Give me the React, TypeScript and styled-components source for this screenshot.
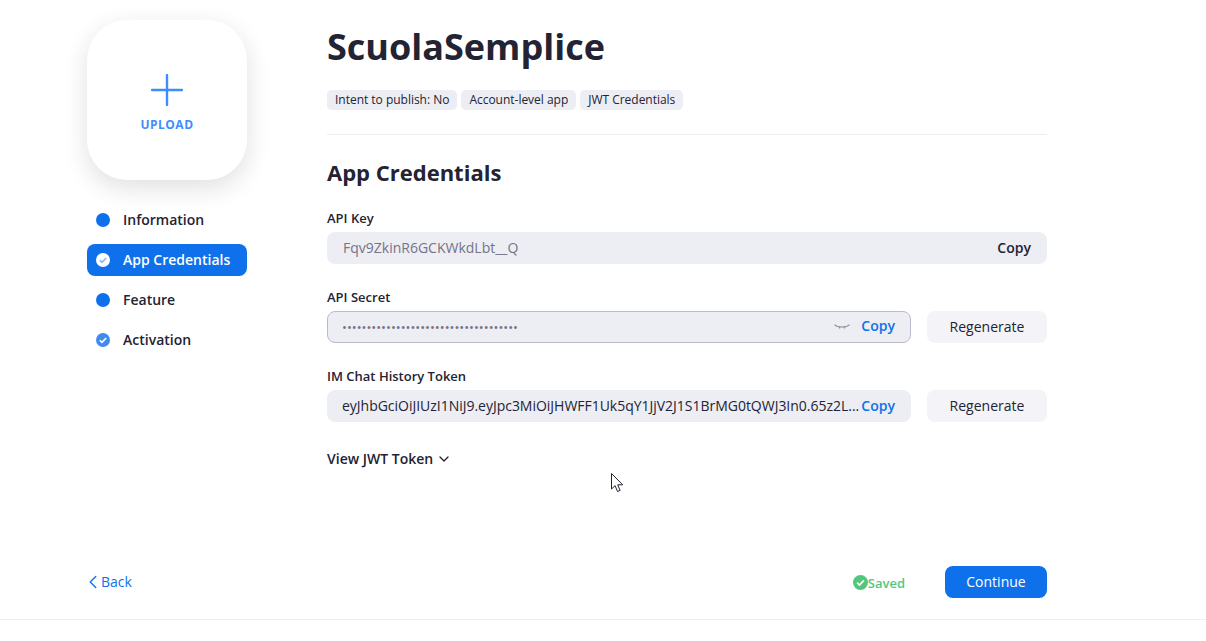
import type { ReactNode } from 'react';
import styled, { createGlobalStyle } from 'styled-components';
import { FiChevronDown, FiChevronLeft } from 'react-icons/fi';

const GlobalStyle = createGlobalStyle`
   html, body {
      margin: 0;
      padding: 0;
      background: #fff;
      font-family: 'Open Sans', sans-serif;
      color: #232333;
   }
   * { box-sizing: border-box; }
`;

const Page = styled.div`
   position: relative;
   width: 1206px;
   height: 641px;
   overflow: hidden;
   display: flex;
   flex-direction: column;
`;

const Content = styled.div`
   width: 960px;
   height: 619px;
   margin-left: 87px;
   display: grid;
   grid-template-columns: 160px 720px;
   column-gap: 80px;
   grid-template-rows: 1fr 32px;
   padding: 20px 0 21px;
`;

const FooterLine = styled.div`
   height: 1px;
   background: #ededf4;
`;

const Sidebar = styled.aside`
   display: flex;
   flex-direction: column;
`;

const UploadCard = styled.div`
   width: 160px;
   height: 160px;
   border-radius: 40px;
   background: #fff;
   box-shadow: 0 8px 24px rgba(35, 35, 51, 0.14);
   display: flex;
   flex-direction: column;
   align-items: center;
   padding-top: 54px;
   margin-bottom: 24px;
`;

const UploadLabel = styled.span`
   margin-top: 11px;
   font-size: 12px;
   line-height: 16px;
   font-weight: 700;
   letter-spacing: 0.5px;
   color: #3f8cff;
`;

const Steps = styled.nav`
   display: flex;
   flex-direction: column;
   gap: 8px;
`;

const Step = styled.div<{ $active?: boolean }>`
   height: 32px;
   display: flex;
   align-items: center;
   gap: 13px;
   padding-left: 9px;
   border-radius: 8px;
   font-size: 14px;
   font-weight: 600;
   background: ${(p) => (p.$active ? '#0e71eb' : 'transparent')};
   color: ${(p) => (p.$active ? '#fff' : '#232333')};
`;

const StepLabel = styled.span`
   margin-bottom: 2px;
`;

const Dot = styled.span`
   width: 14px;
   height: 14px;
   border-radius: 50%;
   background: #0e71eb;
`;

const Main = styled.main`
   display: flex;
   flex-direction: column;
`;

const Title = styled.h1`
   margin: 0;
   font-size: 36px;
   line-height: 54px;
   font-weight: 700;
   color: #232333;
`;

const Tags = styled.div`
   display: flex;
   gap: 4px;
   margin-top: 16px;
`;

const Tag = styled.span`
   height: 20px;
   padding: 0 8px;
   border-radius: 5px;
   background: #ededf4;
   font-size: 12px;
   line-height: 20px;
   letter-spacing: -0.02px;
   color: #232333;
`;

const Divider = styled.hr`
   width: 100%;
   height: 1px;
   margin: 24px 0 0;
   border: 0;
   background: #ededf4;
`;

const Heading = styled.h2`
   margin: 21px 0 0;
   font-size: 22px;
   line-height: 32px;
   font-weight: 700;
   color: #232333;
`;

const Field = styled.div<{ $first?: boolean }>`
   margin-top: ${(p) => (p.$first ? '20px' : '23px')};
`;

const Label = styled.div`
   font-size: 13px;
   line-height: 20px;
   font-weight: 600;
   margin-bottom: 4px;
   color: #232333;
`;

const FieldRow = styled.div`
   display: flex;
   gap: 16px;
`;

const InputBox = styled.div<{ $outlined?: boolean }>`
   flex: 1;
   min-width: 0;
   height: 32px;
   display: flex;
   align-items: center;
   padding: 0 15px 0 14px;
   border-radius: 8px;
   background: #ededf4;
   border: 1px solid ${(p) => (p.$outlined ? '#babacc' : '#ededf4')};
`;

const Value = styled.span<{ $muted?: boolean }>`
   flex: 1;
   min-width: 0;
   padding-left: ${(p) => (p.$muted ? '1px' : '0')};
   font-size: 14px;
   line-height: 20px;
   letter-spacing: ${(p) => (p.$muted ? '0' : '-0.02px')};
   white-space: nowrap;
   color: ${(p) => (p.$muted ? '#747487' : '#232333')};
`;

const Dots = styled.span`
   flex: 1;
   font-size: 13px;
   line-height: 20px;
   color: #747487;
`;

const CopyLink = styled.span<{ $blue?: boolean; $raised?: boolean }>`
   flex: none;
   font-size: 14px;
   font-weight: 600;
   line-height: 20px;
   margin-bottom: ${(p) => (p.$raised ? '2px' : '0')};
   color: ${(p) => (p.$blue ? '#0e71eb' : '#232333')};
`;

const EyeIcon = styled.svg`
   flex: none;
   margin-right: 11px;
`;

const RegenButton = styled.button`
   flex: none;
   width: 120px;
   height: 32px;
   padding: 0 0 2px;
   border: 0;
   border-radius: 8px;
   background: #f3f3f8;
   font-family: inherit;
   font-size: 14px;
   color: #232333;
`;

const Toggle = styled.div`
   display: flex;
   align-items: center;
   gap: 3px;
   margin-top: 27px;
   font-size: 14px;
   line-height: 20px;
   font-weight: 600;
   color: #232333;
`;

const BackLink = styled.div`
   display: flex;
   align-items: center;
   height: 32px;
   padding-bottom: 2px;
   font-size: 14px;
   color: #0e71eb;
`;

const BackChevron = styled(FiChevronLeft)`
   margin: 1px -3px 0 -5px;
   stroke-width: 1.5;
`;

const Actions = styled.div`
   display: flex;
   justify-content: flex-end;
   align-items: center;
   height: 32px;
`;

const Saved = styled.span`
   display: flex;
   align-items: center;
   margin-right: 40px;
   font-size: 13px;
   font-weight: 600;
   color: #52c77b;
`;

const SavedText = styled.span`
   margin-top: 2px;
`;

const ContinueButton = styled.button`
   width: 102px;
   height: 32px;
   padding: 0 0 2px;
   border: 0;
   border-radius: 8px;
   background: #0e71eb;
   color: #fff;
   font-family: inherit;
   font-size: 14px;
   font-weight: 500;
`;

const Cursor = styled.svg`
   position: absolute;
   left: 611px;
   top: 473px;
`;

function CheckDot({ fill, tick, size = 14 }: { fill: string; tick: string; size?: number }) {
   return (
      <svg width={size} height={size} viewBox="0 0 14 14">
         <circle cx="7" cy="7" r="7" fill={fill} />
         <path d="M3.8 7.2l2.2 2.2 4.2-4.4" fill="none" stroke={tick} strokeWidth="1.6" />
      </svg>
   );
}

function StepItem({ icon, active, children }: { icon: ReactNode; active?: boolean; children: ReactNode }) {
   return (
      <Step $active={active}>
         {icon}
         <StepLabel>{children}</StepLabel>
      </Step>
   );
}

export default function App() {
   return (
      <>
         <GlobalStyle />
         <Page>
            <Content>
               <Sidebar>
                  <UploadCard>
                     <svg width="32" height="32" viewBox="0 0 32 32">
                        <path d="M16 1v30M1 16h30" stroke="#3f8cff" strokeWidth="2.4" strokeLinecap="round" />
                     </svg>
                     <UploadLabel>UPLOAD</UploadLabel>
                  </UploadCard>
                  <Steps>
                     <StepItem icon={<Dot />}>Information</StepItem>
                     <StepItem active icon={<CheckDot fill="#fff" tick="#8ab8f5" />}>App Credentials</StepItem>
                     <StepItem icon={<Dot />}>Feature</StepItem>
                     <StepItem icon={<CheckDot fill="#3f8cee" tick="#fff" />}>Activation</StepItem>
                  </Steps>
               </Sidebar>
               <Main>
                  <Title>ScuolaSemplice</Title>
                  <Tags>
                     <Tag>Intent to publish: No</Tag>
                     <Tag>Account-level app</Tag>
                     <Tag>JWT Credentials</Tag>
                  </Tags>
                  <Divider />
                  <Heading>App Credentials</Heading>
                  <Field $first>
                     <Label>API Key</Label>
                     <FieldRow>
                        <InputBox>
                           <Value $muted>Fqv9ZkinR6GCKWkdLbt__Q</Value>
                           <CopyLink>Copy</CopyLink>
                        </InputBox>
                     </FieldRow>
                  </Field>
                  <Field>
                     <Label>API Secret</Label>
                     <FieldRow>
                        <InputBox $outlined>
                           <Dots>••••••••••••••••••••••••••••••••••••</Dots>
                           <EyeIcon width="16" height="6" viewBox="0 0 16 6">
                              <path d="M0.5 0.8c1 .4 1.5 1 2.5 1.4 3 1 7 1 10 0 1-.4 1.5-1 2.5-1.4M5.5 3.2v1.4M10.5 3.2v1.4" fill="none" stroke="#8c8c9c" strokeWidth="1.1" />
                           </EyeIcon>
                           <CopyLink $blue $raised>Copy</CopyLink>
                        </InputBox>
                        <RegenButton>Regenerate</RegenButton>
                     </FieldRow>
                  </Field>
                  <Field>
                     <Label>IM Chat History Token</Label>
                     <FieldRow>
                        <InputBox>
                           <Value>eyJhbGciOiJIUzI1NiJ9.eyJpc3MiOiJHWFF1Uk5qY1JjV2J1S1BrMG0tQWJ3In0.65z2L...</Value>
                           <CopyLink $blue>Copy</CopyLink>
                        </InputBox>
                        <RegenButton>Regenerate</RegenButton>
                     </FieldRow>
                  </Field>
                  <Toggle>View JWT Token <FiChevronDown size={16} /></Toggle>
               </Main>
               <BackLink><BackChevron size={22} />Back</BackLink>
               <Actions>
                  <Saved><CheckDot fill="#52c77b" tick="#fff" size={15} /><SavedText>Saved</SavedText></Saved>
                  <ContinueButton>Continue</ContinueButton>
               </Actions>
            </Content>
            <FooterLine />
            <Cursor width="13" height="20" viewBox="0 0 13 20">
               <path d="M0.5 0.5v15.5l3.6-3.3 2.4 5.8 2.6-1.1-2.4-5.6h5z" fill="#fff" stroke="#232333" strokeWidth="1" />
            </Cursor>
         </Page>
      </>
   );
}
